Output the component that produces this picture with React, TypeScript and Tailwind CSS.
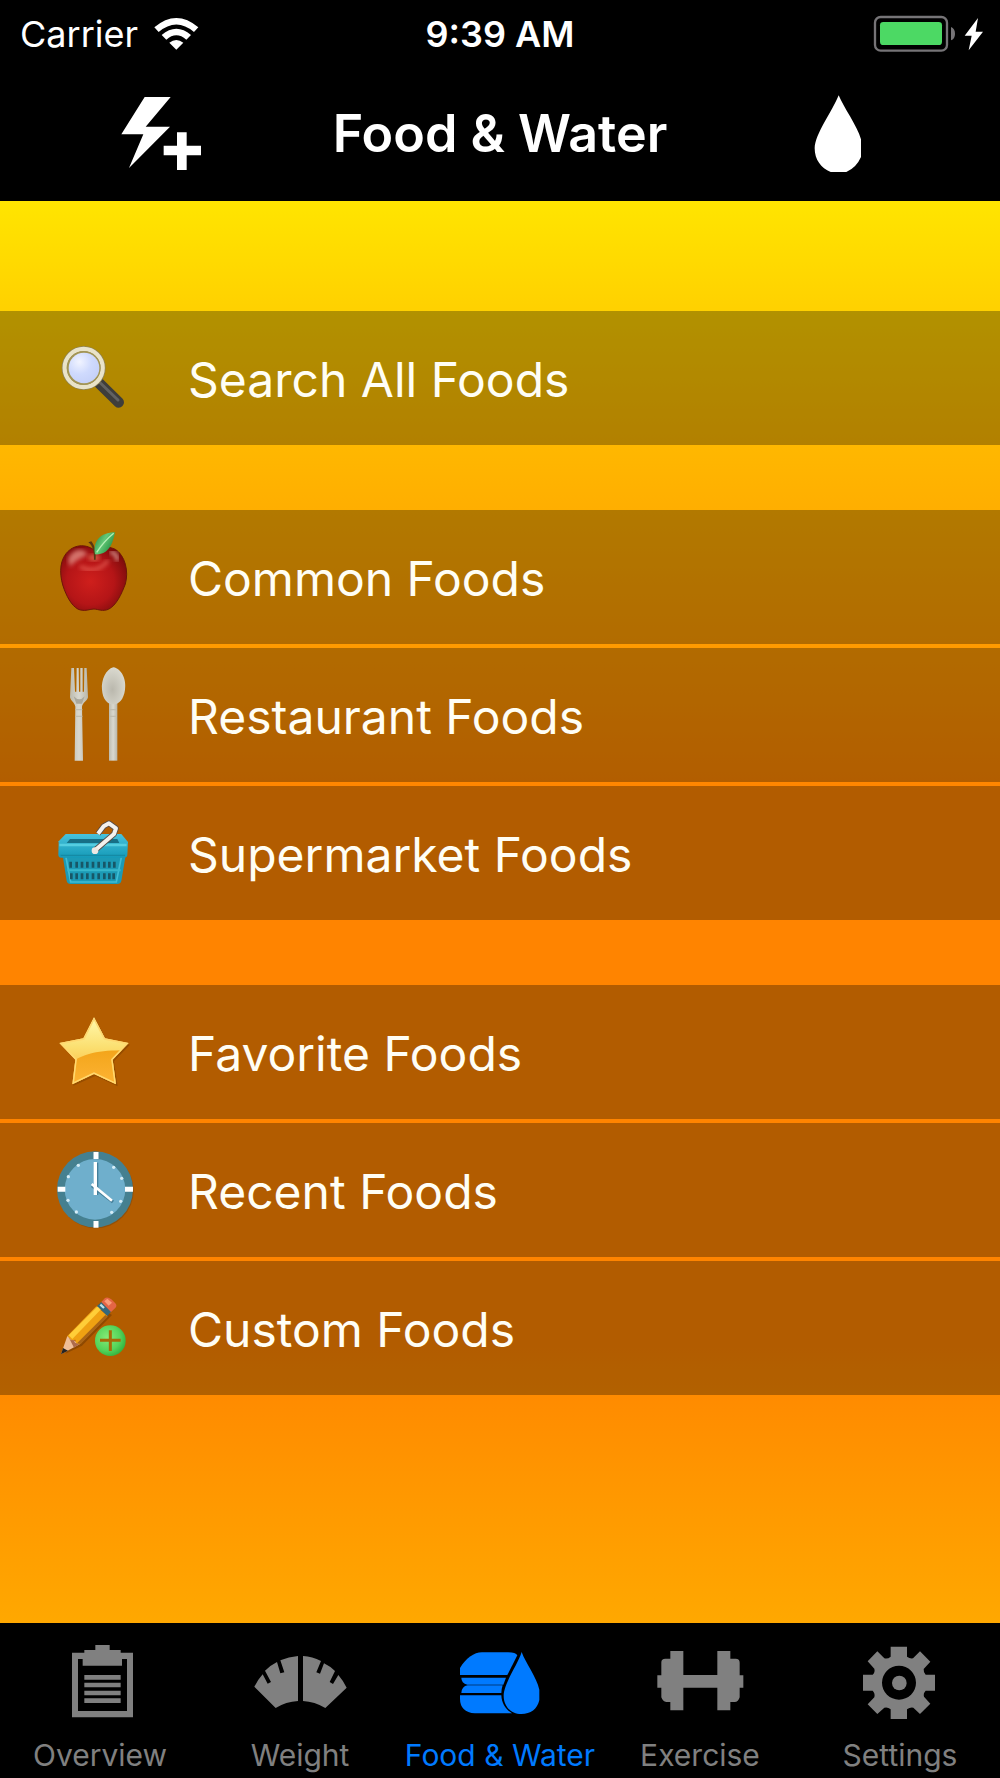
import type { ReactNode } from "react";
import clsx from "clsx";

const SearchIcon = () => (
  <svg viewBox="0 -6 360 360" className="size-[120px] shrink-0" aria-hidden="true">
    <defs>
      <radialGradient id="lens" cx="0.35" cy="0.3" r="0.8">
        <stop offset="0" stopColor="#f1f4ff" />
        <stop offset="0.5" stopColor="#cfdafd" />
        <stop offset="1" stopColor="#c3cff8" />
      </radialGradient>
    </defs>
    <path d="M178 190 L236 247" stroke="#3e3d3b" strokeWidth="32" strokeLinecap="round" />
    <path d="M178 186 L234 240" stroke="#626161" strokeWidth="9" strokeLinecap="round" />
    <circle cx="131" cy="144" r="66" fill="#8f8355" />
    <circle cx="131" cy="144" r="57" fill="none" stroke="#e9e3c8" strokeWidth="13" />
    <circle cx="131" cy="144" r="51" fill="#a39553" />
    <circle cx="132" cy="144" r="46" fill="url(#lens)" />
  </svg>
);

const AppleIcon = () => (
  <svg viewBox="0 24 360 360" className="size-[120px] shrink-0" aria-hidden="true">
    <defs>
      <radialGradient id="apple" cx="0.45" cy="0.55" r="0.6">
        <stop offset="0" stopColor="#cf1f1c" />
        <stop offset="0.6" stopColor="#b51517" />
        <stop offset="1" stopColor="#7d0c0c" />
      </radialGradient>
      <linearGradient id="leaf" x1="0" y1="0" x2="1" y2="0.6">
        <stop offset="0" stopColor="#1f7d38" />
        <stop offset="0.5" stopColor="#63c978" />
        <stop offset="1" stopColor="#1f8a3c" />
      </linearGradient>
      <filter id="soft">
        <feGaussianBlur stdDeviation="6" />
      </filter>
    </defs>
    <path
      d="M161 122 C136 104 100 106 78 134 C56 162 59 206 73 242 C84 271 101 298 121 303 C139 307 149 300 162 300 C176 301 187 308 205 301 C229 290 245 254 256 225 C267 187 255 139 226 121 C204 111 180 112 161 122 Z"
      fill="url(#apple)"
      stroke="#6e1608"
      strokeWidth="3"
    />
    <path d="M84 150 C100 116 132 116 142 137 C124 146 105 155 90 173 Z" fill="#f7b2a5" opacity="0.6" filter="url(#soft)" />
    <path d="M120 172 C148 190 183 184 205 153" stroke="#ec6b5e" strokeWidth="10" fill="none" opacity="0.7" filter="url(#soft)" />
    <path d="M210 130 C225 128 233 141 232 156" stroke="#ffd1ca" strokeWidth="9" fill="none" opacity="0.8" filter="url(#soft)" />
    <ellipse cx="162" cy="146" rx="18" ry="10" fill="#e88765" opacity="0.6" filter="url(#soft)" />
    <path d="M162 152 C162 128 160 112 145 100 L154 97 C166 112 168 130 167 152 Z" fill="#593711" />
    <path d="M165 136 C157 98 181 70 225 70 C218 106 205 139 165 136 Z" fill="url(#leaf)" />
    <path d="M170 130 C184 109 200 90 221 73" stroke="#b4efb5" strokeWidth="4" fill="none" />
  </svg>
);

const CutleryIcon = () => (
  <svg viewBox="0 15 360 360" className="size-[120px] shrink-0" aria-hidden="true">
    <defs>
      <linearGradient id="stem" x1="0" y1="0" x2="1" y2="0">
        <stop offset="0" stopColor="#bdbbae" />
        <stop offset="0.5" stopColor="#d9d8cf" />
        <stop offset="1" stopColor="#b9b6a8" />
      </linearGradient>
      <radialGradient id="bowl" cx="0.45" cy="0.6" r="0.6">
        <stop offset="0" stopColor="#bab8ad" />
        <stop offset="1" stopColor="#dad9cf" />
      </radialGradient>
    </defs>
    <path
      d="M94 54 L102 54 L105 125 L109 125 L110 54 L116 54 L117 125 L121 125 L121 54 L128 54 L128 125 L132 125 L133 54 L140 54 L144 142 C142 153 128 158 126 170 L129 332 L104 332 L106 170 C104 158 92 153 90 142 Z"
      fill="url(#stem)"
    />
    <path d="M101 139 Q118 157 134 139 L126 161 H109 Z" fill="#aaa89c" />
    <path d="M207 154 L232 154 L232 332 L207 332 Z" fill="url(#stem)" />
    <path d="M220 52 C246 56 260 91 255 119 C251 148 237 163 220 163 C202 163 188 147 186 119 C183 91 198 57 220 52 Z" fill="url(#bowl)" />
    <path d="M106 179 H127 M106 199 H127 M208 179 H231 M208 199 H231" stroke="#bfbdb0" strokeWidth="4" />
  </svg>
);

const BasketIcon = () => (
  <svg viewBox="0 -24 360 360" className="size-[120px] shrink-0" aria-hidden="true">
    <defs>
      <linearGradient id="basket" x1="0" y1="0" x2="0" y2="1">
        <stop offset="0" stopColor="#48c2dc" />
        <stop offset="1" stopColor="#159ab8" />
      </linearGradient>
    </defs>
    <path d="M67 157 L80 240 Q82 249 92 249 L232 249 Q242 249 244 240 L258 157 Z" fill="#1c9ab5" />
    <path d="M78 169 L92 243 H229 L244 169" fill="none" stroke="#40bdd4" strokeWidth="5" />
    <path d="M77 99 L244 99 L264 123 L262 162 Q261 170 252 170 L64 170 Q55 170 55 161 L56 121 Z" fill="url(#basket)" />
    <path d="M90 114 L232 114 L238 126 L80 126 Z" fill="#176f86" />
    <path d="M58 132 H260" stroke="#55cde0" strokeWidth="7" />
    <path d="M62 163 H255" stroke="#158aa5" strokeWidth="4" />
    <path
      d="M92 182 v18 M110 182 v18 M126 182 v18 M142 182 v18 M159 182 v18 M176 182 v18 M193 182 v18 M208 182 v18 M223 182 v18 M94 217 v18 M110 217 v18 M126 217 v18 M142 217 v18 M159 217 v18 M176 217 v18 M193 217 v18 M208 217 v18 M221 217 v18"
      stroke="#175767"
      strokeWidth="8"
    />
    <path d="M82 208 H242" stroke="#37b8cc" strokeWidth="6" />
    <path d="M174 98 L191 76 L207 67 L228 82 L222 99 L166 147" fill="none" stroke="#554c48" strokeWidth="17" strokeLinejoin="round" />
    <path d="M174 98 L191 76 L207 67 L228 82 L222 99 L166 147" fill="none" stroke="#f4f1ed" strokeWidth="12" strokeLinejoin="round" />
    <circle cx="165" cy="149" r="10" fill="#ede8e3" />
  </svg>
);

const StarIcon = () => (
  <svg viewBox="0 -24 360 360" className="size-[120px] shrink-0" aria-hidden="true">
    <defs>
      <linearGradient id="star" x1="0" y1="0" x2="0" y2="1">
        <stop offset="0" stopColor="#fff9ad" />
        <stop offset="0.45" stopColor="#fbdf70" />
        <stop offset="1" stopColor="#fcae2e" />
      </linearGradient>
      <linearGradient id="starLow" x1="0" y1="0" x2="0" y2="1">
        <stop offset="0" stopColor="#f3a51b" />
        <stop offset="1" stopColor="#ffb638" />
      </linearGradient>
      <clipPath id="starClip">
        <path d="M162 52 L195 115 L266 129 L218 179 L228 253 L162 222 L97 253 L106 179 L58 129 L130 115 Z" />
      </clipPath>
    </defs>
    <path d="M166 58 L199 120 L270 134 L222 184 L233 259 L166 228 L100 257 L110 184 Z" fill="#733b00" opacity="0.45" />
    <path d="M162 52 L195 115 L266 129 L218 179 L228 253 L162 222 L97 253 L106 179 L58 129 L130 115 Z" fill="url(#star)" />
    <g clipPath="url(#starClip)">
      <path d="M85 194 C130 157 185 150 270 151 L270 270 L80 270 Z" fill="url(#starLow)" />
      <path d="M162 52 L195 115 L266 129 L218 179 L228 253 L162 222 L97 253 L106 179 L58 129 L130 115 Z" fill="none" stroke="#ffd870" strokeWidth="9" />
    </g>
  </svg>
);

const ClockIcon = () => (
  <svg viewBox="0 -3 360 360" className="size-[120px] shrink-0" aria-hidden="true">
    <circle cx="168" cy="179" r="113" fill="#6d4313" opacity="0.45" />
    <circle cx="165" cy="175" r="114" fill="#458090" />
    <circle cx="165" cy="175" r="91" fill="#6fafcc" />
    <path d="M168 63 V84 M168 270 V290 M53 175 H76 M255 175 H279" stroke="#fff" strokeWidth="15" />
    {[
      [115, 103], [221, 109], [85, 137], [245, 142], [84, 208], [242, 211], [109, 243], [215, 244],
    ].map(([cx, cy]) => (
      <circle key={`${cx}-${cy}`} cx={cx} cy={cy} r="5" fill="#d5edf7" />
    ))}
    <path d="M170 95 V192 M156 164 L219 213" stroke="#447f9a" strokeWidth="10" />
    <path d="M166 93 V192" stroke="#fff" strokeWidth="10" />
    <path d="M155 159 L216 209" stroke="#fff" strokeWidth="8" />
  </svg>
);

const PencilIcon = () => (
  <svg viewBox="0 -9 360 360" className="size-[120px] shrink-0" aria-hidden="true">
    <defs>
      <radialGradient id="add" cx="0.4" cy="0.4" r="0.7">
        <stop offset="0" stopColor="#86ea78" />
        <stop offset="0.6" stopColor="#55d45a" />
        <stop offset="1" stopColor="#29a936" />
      </radialGradient>
    </defs>
    <path d="M76 248 L126 224 L216 132 L203 124 L90 230 Z" fill="#6c3600" opacity="0.5" />
    <path d="M63 250 L82 195 L119 220 Z" fill="#efbe98" />
    <path d="M84 195 L92 206 L99 203 L105 215 L120 218 L102 230 Z" fill="#ad6a4b" />
    <path d="M63 250 L69 231 L84 239 Z" fill="#252425" />
    <path d="M82 195 L169 106 L203 135 L120 220 L108 216 L106 206 L95 208 Z" fill="#efa112" />
    <path d="M86 193 L174 105 L184 114 L97 204 Z" fill="#ffce38" />
    <path d="M111 217 L196 132 L203 137 L122 219 Z" fill="#aa6416" />
    <path d="M171 105 L184 93 L214 121 L202 135 Z" fill="#34677b" />
    <path d="M181 101 L192 111" stroke="#bae1e8" strokeWidth="7" />
    <path d="M184 93 L195 81 Q203 76 214 85 L226 97 Q233 104 225 112 L213 123 Z" fill="#e46545" />
    <path d="M193 91 L202 83 L216 95 L206 104 Z" fill="#fb9c78" />
    <circle cx="211" cy="209" r="46" fill="url(#add)" />
    <path d="M211 178 V240 M180 208 H242" stroke="#a66a08" strokeWidth="9" />
  </svg>
);

const OverviewIcon = () => (
  <svg viewBox="150 90 300 240" className="h-20 w-[100px]" fill="currentColor" aria-hidden="true">
    <path d="M216 128 H253 V120 H286 V105 H329 V120 H362 V128 H399 V322 H216 Z M234 147 V303 H381 V147 H366 V167 H248 V147 Z" fillRule="evenodd" />
    <path d="M253 195 H362 V209 H253 Z M253 218 H362 V232 H253 Z M253 242 H362 V256 H253 Z M253 265 H362 V279 H253 Z" />
  </svg>
);

const WeightIcon = () => (
  <svg viewBox="750 90 300 240" className="h-20 w-[100px]" fill="currentColor" aria-hidden="true">
    <path d="M894 138 V273 Q858 275 827 294 L763 230 Q773 210 788 193 L803 221 L813 216 L795 182 Q811 166 831 156 L841 190 L853 187 L841 151 Q866 140 894 138 Z" />
    <path d="M909 138 V273 Q944 275 976 294 L1040 233 Q1029 211 1015 195 L999 222 L989 216 L1005 183 Q989 168 972 160 L960 191 L949 187 L963 153 Q937 140 909 138 Z" />
  </svg>
);

const FoodIcon = () => (
  <svg viewBox="150 90 300 240" className="h-20 w-[100px]" fill="currentColor" aria-hidden="true">
    <path d="M180 195 V174 C197 145 222 127 246 127 H325 Q347 127 352 136 L322 195 Z" />
    <path d="M184 203 H318 L310 224 H202 Q184 219 184 203 Z" />
    <path d="M184 249 Q185 229 203 226 H308 Q304 238 304 249 Z" />
    <path d="M180 256 H304 C305 281 318 299 336 310 H225 Q180 306 180 266 Z" />
    <path d="M365 126 C376 158 410 201 418 239 V270 C412 298 392 312 364 312 C334 312 311 290 311 257 C311 221 353 164 365 126 Z" />
  </svg>
);

const ExerciseIcon = () => (
  <svg viewBox="30 90 300 240" className="h-20 w-[100px]" fill="currentColor" aria-hidden="true">
    <path d="M91 123 H130 V195 H232 V123 H271 V146 H287 Q299 146 299 158 V196 H310 V233 H299 V262 Q295 276 284 276 H271 V301 H232 V233 H130 V301 H91 V276 H79 Q68 274 64 262 V233 H52 V196 H64 V157 Q64 146 76 146 H91 Z" />
  </svg>
);

const SettingsIcon = () => (
  <svg viewBox="630 90 300 240" className="h-20 w-[100px]" fill="currentColor" aria-hidden="true">
    <path
      fillRule="evenodd"
      d="M752 110 H801 V140 Q810 147 819 145 L840 124 L871 155 L851 177 Q850 187 857 194 H885 V242 H857 Q849 250 852 260 L871 281 L840 312 L820 293 Q810 291 801 298 V327 H752 V298 Q743 290 733 293 L712 312 L683 283 L703 262 Q706 250 698 242 H669 V194 H698 Q706 186 703 176 L683 154 L712 124 L733 145 Q743 148 752 140 Z M777 167 A51 51 0 1 0 777 269 A51 51 0 1 0 777 167 Z"
    />
    <circle cx="778" cy="219" r="22" />
  </svg>
);

type FoodLink = { label: string; href: string; icon: ReactNode };

const sections: FoodLink[][] = [
  [{ label: "Search All Foods", href: "#search", icon: <SearchIcon /> }],
  [
    { label: "Common Foods", href: "#common", icon: <AppleIcon /> },
    { label: "Restaurant Foods", href: "#restaurant", icon: <CutleryIcon /> },
    { label: "Supermarket Foods", href: "#supermarket", icon: <BasketIcon /> },
  ],
  [
    { label: "Favorite Foods", href: "#favorite", icon: <StarIcon /> },
    { label: "Recent Foods", href: "#recent", icon: <ClockIcon /> },
    { label: "Custom Foods", href: "#custom", icon: <PencilIcon /> },
  ],
];

const tabs = [
  { label: "Overview", href: "#overview", icon: <OverviewIcon /> },
  { label: "Weight", href: "#weight", icon: <WeightIcon /> },
  { label: "Food & Water", href: "#food", icon: <FoodIcon />, active: true },
  { label: "Exercise", href: "#exercise", icon: <ExerciseIcon /> },
  { label: "Settings", href: "#settings", icon: <SettingsIcon /> },
];

const StatusBar = () => (
  <div className="grid h-[67px] grid-cols-3 items-center px-4 text-[36px] leading-10">
    <div className="flex items-center gap-4 pl-1">
      <span>Carrier</span>
      <svg viewBox="468 48 135 99" className="h-[33px] w-[45px]" fill="#fff" aria-label="Wi-Fi">
        <path d="M469 79 Q535 23 601 79 L588 93 Q535 48 482 93 Z" />
        <path d="M491 102 Q535 65 579 102 L565 116 Q535 90 505 116 Z" />
        <path d="M514 125 Q535 109 556 125 L535 146 Z" />
      </svg>
    </div>
    <span className="text-center font-semibold">9:39 AM</span>
    <div className="flex justify-end">
      <svg viewBox="1122 42 333 111" className="h-[37px] w-[111px]" aria-label="Battery charging">
        <rect x="1128" y="48" width="216" height="101" rx="17" fill="none" stroke="#767477" strokeWidth="7" />
        <rect x="1143" y="63" width="186" height="69" rx="10" fill="#4cd964" />
        <path d="M1356 78 Q1368 83 1368 98 Q1368 113 1356 118 Z" fill="#767477" />
        <path d="M1437 51 L1397 104 H1418 L1409 148 L1452 92 H1430 Z" fill="#fff" />
      </svg>
    </div>
  </div>
);

const Header = () => (
  <header className="bg-black text-white">
    <StatusBar />
    <div className="flex h-[134px] items-center justify-between px-28">
      <button type="button" aria-label="Quick add">
        <svg viewBox="336 252 300 300" className="size-[100px]" fill="#fff" aria-hidden="true">
          <path d="M434 291 H512 L437 380 H510 L387 504 L430 403 H364 Z" />
          <path d="M531 397 H560 V437 H603 V466 H560 V510 H531 V466 H491 V437 H531 Z" />
        </svg>
      </button>
      <h1 className="text-[52px] leading-[60px] font-semibold">Food &amp; Water</h1>
      <button type="button" aria-label="Add water">
        <svg viewBox="864 252 300 300" className="size-[100px]" fill="#fff" aria-hidden="true">
          <path d="M1016 286 C1031 323 1071 376 1083 418 V471 Q1069 503 1039 516 H992 C963 504 944 479 944 445 C945 401 997 334 1016 286 Z" />
        </svg>
      </button>
    </div>
  </header>
);

const TabBar = () => (
  <nav className="grid grid-cols-5 bg-black pt-[17px] pb-[3px]">
    {tabs.map((tab) => (
      <a
        key={tab.label}
        href={tab.href}
        aria-current={tab.active ? "page" : undefined}
        className={clsx(
          "flex flex-col items-center gap-[15px] text-[30px] leading-10 whitespace-nowrap",
          tab.active ? "text-[#007aff]" : "text-[#808080]"
        )}
      >
        {tab.icon}
        {tab.label}
      </a>
    ))}
  </nav>
);

export default function App() {
  return (
    <div className="flex min-h-screen flex-col bg-black font-['Inter',sans-serif]">
      <Header />
      <main className="flex flex-1 flex-col gap-[65px] bg-[linear-gradient(to_bottom,#ffe500_0%,#ffb800_17%,#ff8400_42%,#ff8400_80%,#ffa800_100%)] pt-[110px] pb-16">
        {sections.map((items) => (
          <ul key={items[0].label} className="flex flex-col gap-1">
            {items.map((item) => (
              <li key={item.label}>
                <a
                  href={item.href}
                  className="flex h-[134px] items-center gap-7 bg-black/30 pr-6 pl-10 text-[48px] leading-[56px] text-[#fffef5]"
                >
                  {item.icon}
                  <span className="pt-1">{item.label}</span>
                </a>
              </li>
            ))}
          </ul>
        ))}
      </main>
      <TabBar />
    </div>
  );
}
